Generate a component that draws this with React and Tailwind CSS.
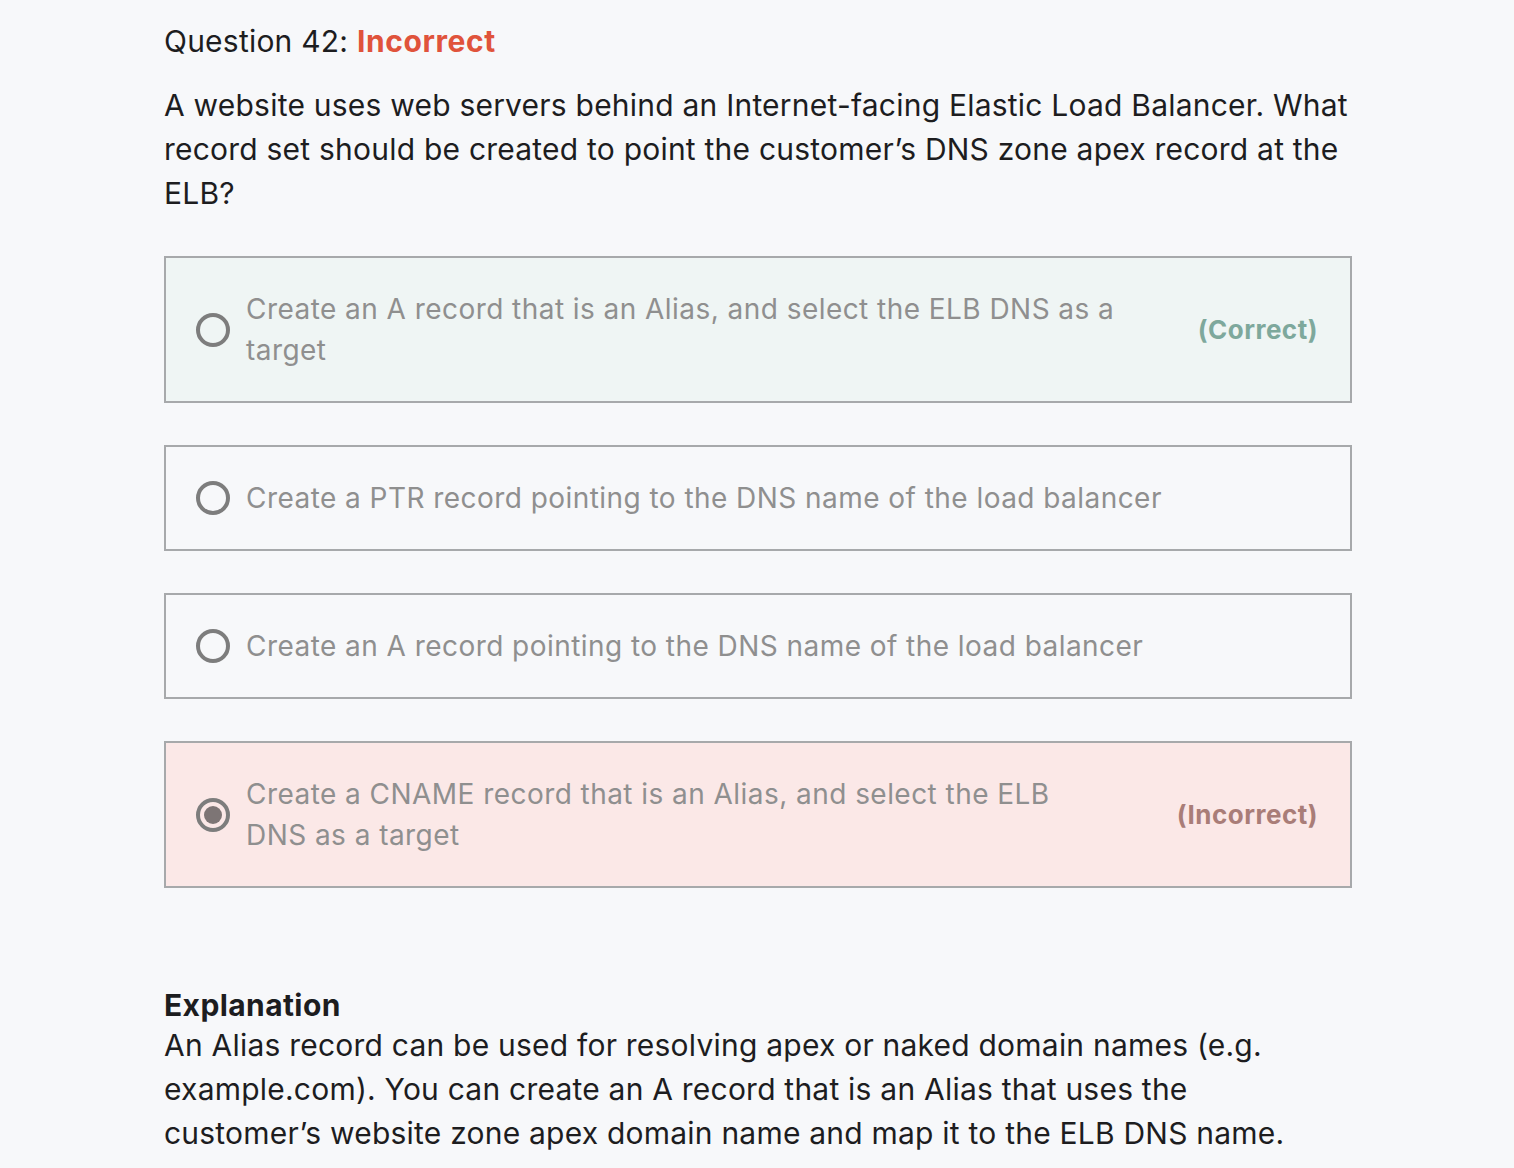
import React from 'react';

const options = [
    {
        lines: ['Create an A record that is an Alias, and select the ELB DNS as a', 'target'],
        status: 'correct',
    },
    { lines: ['Create a PTR record pointing to the DNS name of the load balancer'] },
    { lines: ['Create an A record pointing to the DNS name of the load balancer'] },
    {
        lines: ['Create a CNAME record that is an Alias, and select the ELB', 'DNS as a target'],
        status: 'incorrect',
        selected: true,
    },
];

function Radio({ selected }) {
    return (
        <div className="w-[34px] h-[34px] shrink-0 rounded-full border-[4px] border-[#7d7d7d] flex items-center justify-center">
            {selected && <div className="w-[18px] h-[18px] rounded-full bg-[#7d7575]" />}
        </div>
    );
}

function Option({ lines, status, selected }) {
    const bg =
        status === 'correct' ? 'bg-[#eff5f4]' : status === 'incorrect' ? 'bg-[#fbe8e7]' : 'bg-[#f7f8fa]';

    return (
        <div className={`flex items-center border-2 border-[#a7a9ab] ${bg} pl-[30px] pr-[32px] py-[30.5px]`}>
            <Radio selected={selected} />
            <p className="ml-[16px] flex-1 text-[28px] leading-[41px] tracking-[0.45px] text-[#8f8f8f]">
                {lines.map((l, i) => (
                    <React.Fragment key={i}>
                        {i > 0 && <br />}
                        {l}
                    </React.Fragment>
                ))}
            </p>
            {status === 'correct' && (
                <span className="ml-4 text-[26px] font-bold tracking-[0.5px] text-[#7ea89c]">(Correct)</span>
            )}
            {status === 'incorrect' && (
                <span className="ml-4 text-[26px] font-bold tracking-[0.5px] text-[#a97d78]">(Incorrect)</span>
            )}
        </div>
    );
}

export default function App() {
    return (
        <div className="min-h-screen bg-[#f7f8fa] font-['Inter',sans-serif] text-[#1d1d1f] tracking-[0.22px]">
            <div className="w-[1188px] ml-[164px] pt-[19px] pb-[20px]">
                <h2 className="text-[30px] leading-[44px]">
                    Question 42:{' '}
                    <span className="font-bold tracking-[0.6px] text-[#e0533b]">Incorrect</span>
                </h2>

                <p className="mt-[20px] text-[30px] leading-[44px]">
                    A website uses web servers behind an Internet-facing Elastic Load Balancer. What record set
                    should be created to point the customer’s DNS zone apex record at the ELB?
                </p>

                {/* Options */}
                <div className="mt-[41px] flex flex-col gap-[42px]">
                    {options.map((o, i) => (
                        <Option key={i} {...o} />
                    ))}
                </div>

                {/* Explanation */}
                <div className="mt-[99px]">
                    <h3 className="text-[30px] leading-[36px] font-bold tracking-[0.4px]">Explanation</h3>
                    <p className="text-[30px] leading-[44px]">
                        An Alias record can be used for resolving apex or naked domain names (e.g. example.com).
                        You can create an A record that is an Alias that uses the customer’s website zone apex
                        domain name and map it to the ELB DNS name.
                    </p>
                </div>
            </div>
        </div>
    );
}
